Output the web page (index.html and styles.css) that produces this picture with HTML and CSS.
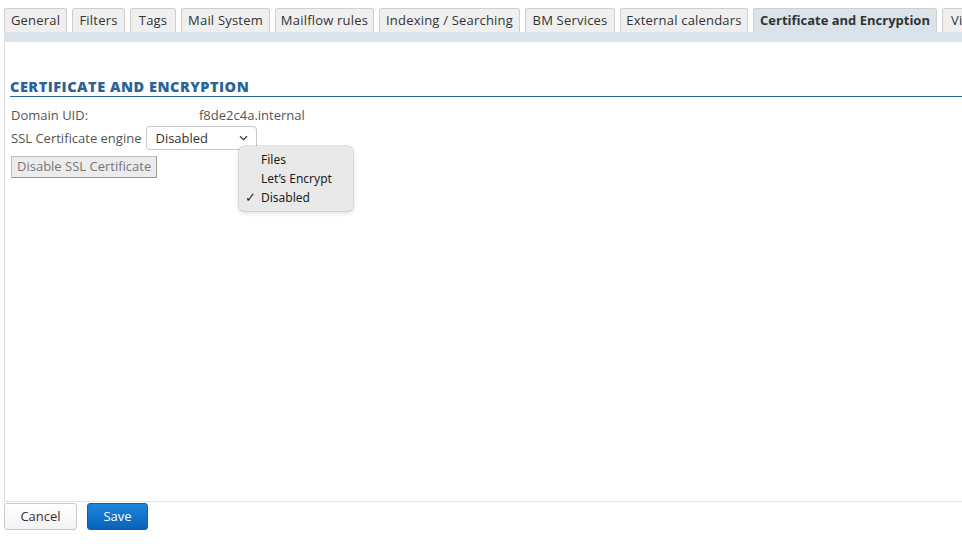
FILE: index.html
```html
<!DOCTYPE html>
<html>
<head>
<meta charset="utf-8">
<link rel="stylesheet" href="styles.css">
</head>
<body>
<div class="tabs">
  <div class="tab w-general">General</div>
  <div class="tab w-filters">Filters</div>
  <div class="tab w-tags">Tags</div>
  <div class="tab w-mail">Mail System</div>
  <div class="tab w-flow">Mailflow rules</div>
  <div class="tab w-index">Indexing / Searching</div>
  <div class="tab w-bm">BM Services</div>
  <div class="tab w-ext">External calendars</div>
  <div class="tab active w-cert">Certificate and Encryption</div>
  <div class="tab w-virt">Virtualization</div>
</div>
<div class="band"></div>
<div class="panel">
  <h2 class="title">CERTIFICATE AND ENCRYPTION</h2>
  <div class="row">
    <span class="label uid">Domain UID:</span>
    <span class="value">f8de2c4a.internal</span>
  </div>
  <div class="row">
    <span class="label">SSL Certificate engine</span>
    <span class="select">Disabled
      <svg class="chev" width="9" height="6" viewBox="0 0 9 6"><path d="M1 1.2 L4.5 4.6 L8 1.2" fill="none" stroke="#333" stroke-width="1.2"/></svg>
    </span>
  </div>
  <div class="row">
    <span class="btn-disabled">Disable SSL Certificate</span>
  </div>
</div>
<div class="footer">
  <span class="btn cancel">Cancel</span>
  <span class="btn save">Save</span>
</div>
<div class="menu">
  <div class="item">Files</div>
  <div class="item">Let’s Encrypt</div>
  <div class="item"><span class="check">✓</span>Disabled</div>
</div>
</body>
</html>
```
FILE: styles.css
```css
html, body {
  margin: 0;
  padding: 0;
  background: #fff;
  font-family: "Open Sans", "Liberation Sans", sans-serif;
  overflow: hidden;
}
body {
  width: 962px;
  height: 544px;
  position: relative;
}
.tabs {
  display: flex;
  gap: 5px;
  padding: 8px 0 0 4px;
  white-space: nowrap;
  overflow: hidden;
}
.tab {
  flex: none;
  box-sizing: border-box;
  height: 24px;
  line-height: 22px;
  padding: 0;
  text-align: center;
  border: 1px solid #cfcfcf;
  border-bottom: none;
  border-radius: 3px 3px 0 0;
  background: #efefef;
  color: #333;
  font-size: 13px;
  letter-spacing: 0.2px;
}
.w-general { width: 63px; }
.w-filters { width: 53px; }
.w-tags { width: 46px; }
.w-mail { width: 89px; }
.w-flow { width: 99px; }
.w-index { width: 141px; }
.w-bm { width: 90px; }
.w-ext { width: 128px; }
.w-cert { width: 184px; }
.w-virt { width: 100px; text-align: left; padding-left: 8px; }
.tab.active {
  background: #dae3ea;
  font-weight: 700;
  letter-spacing: 0;
}
.band {
  height: 10px;
  margin-left: 4px;
  background: #dae3ea;
}
.panel {
  margin-left: 4px;
  height: 459px;
  border-left: 1px solid #dcdcdc;
  border-bottom: 1px solid #dde4e9;
  padding-left: 5px;
  box-sizing: content-box;
}
.title {
  margin: 0;
  padding-top: 36px;
  padding-bottom: 1px;
  font-size: 14.5px;
  font-weight: 800;
  color: #2a6496;
  line-height: 17px;
  border-bottom: 1px solid #2a6496;
  letter-spacing: 0.5px;
}
.row {
  display: flex;
  align-items: center;
  font-size: 13px;
  color: #555;
  padding-left: 1px;
}
.row:nth-of-type(1) {
  margin-top: 8px;
  height: 20px;
}
.row:nth-of-type(2) {
  margin-top: 1px;
  height: 24px;
}
.row:nth-of-type(3) {
  margin-top: 6px;
}
.label.uid {
  width: 188px;
}
.select {
  display: flex;
  align-items: center;
  justify-content: space-between;
  box-sizing: border-box;
  width: 111px;
  height: 24px;
  margin-left: 5px;
  padding: 0 8px 0 8px;
  border: 1px solid #c8c8c8;
  border-radius: 4px;
  color: #333;
  background: #fff;
}
.chev {
  display: block;
}
.btn-disabled {
  display: inline-block;
  box-sizing: border-box;
  height: 22px;
  line-height: 19px;
  padding: 0 5px;
  background: #ececec;
  border: 1px solid #bdbdbd;
  border-right-color: #999;
  border-bottom-color: #999;
  color: #777;
  font-size: 13px;
}
.footer {
  display: flex;
  gap: 10px;
  padding: 0 0 0 4px;
  margin-top: 1px;
}
.btn {
  box-sizing: border-box;
  height: 27px;
  line-height: 25px;
  font-size: 13px;
  border-radius: 3px;
  text-align: center;
}
.cancel {
  width: 73px;
  border: 1px solid #c9c9c9;
  background: linear-gradient(#ffffff, #f3f3f3);
  color: #333;
}
.save {
  width: 61px;
  border: 1px solid #0b5fb0;
  background: linear-gradient(#1b86dc, #0a62b9);
  color: #fff;
}
.menu {
  position: absolute;
  left: 239px;
  top: 146px;
  width: 114px;
  height: 65px;
  box-sizing: border-box;
  padding-top: 4px;
  background: #e9e9e9;
  border-radius: 5px;
  box-shadow: 0 0 0 0.5px rgba(0,0,0,0.18), 0 2px 5px rgba(0,0,0,0.15);
  font-family: "Noto Sans", "Roboto", sans-serif;
  font-size: 12px;
  color: #1e1e1e;
}
.item {
  height: 19px;
  line-height: 19px;
  padding-left: 22px;
  position: relative;
}
.check {
  position: absolute;
  left: 6px;
  top: 0;
  font-size: 13px;
}
```
